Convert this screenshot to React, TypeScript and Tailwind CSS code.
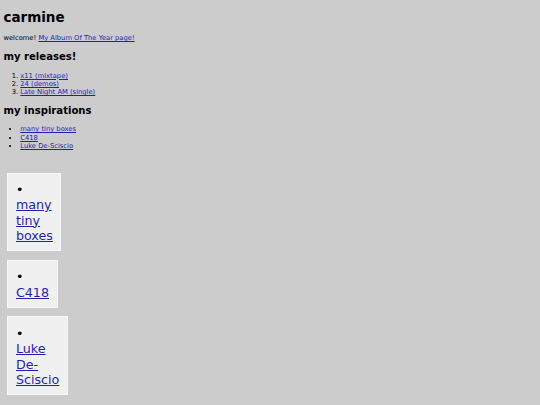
const releases = ["x11 (mixtape)", "24 (demos)", "Late Night AM (single)"];
const inspirations = ["many tiny boxes", "C418", "Luke De-Sciscio"];

const link = "text-[#1f1fb8] underline";

export default function App() {
  return (
    <div
      className="min-h-[405px] bg-[#cccccc] px-[3.4px] pt-[9px] text-black"
      style={{ fontFamily: '"DejaVu Sans", Verdana, sans-serif' }}
    >
      <h1 className="text-[13.5px] font-bold leading-[16.4px]">carmine</h1>

      <p className="mt-[9px] text-[6.75px] leading-[8.2px]">
        welcome!{" "}
        <a href="#" className={link}>
          My Album Of The Year page!
        </a>
      </p>

      <h2 className="mt-[8.4px] text-[10.1px] font-bold leading-[12.3px]">my releases!</h2>
      <ol className="mt-[8.4px] list-decimal pl-[16.9px] text-[6.75px] leading-[8.2px]">
        {releases.map((r) => (
          <li key={r}>
            <a href="#" className={link}>
              {r}
            </a>
          </li>
        ))}
      </ol>

      <h2 className="mt-[8.4px] text-[10.1px] font-bold leading-[12.3px]">my inspirations</h2>
      <ul className="mt-[8.4px] list-disc pl-[16.9px] text-[6.75px] leading-[8.2px]">
        {inspirations.map((r) => (
          <li key={r}>
            <a href="#" className={link}>
              {r}
            </a>
          </li>
        ))}
      </ul>

      <div className="mt-[22.6px] flex flex-col items-start gap-[8.4px] pl-[4px] pb-[13px]">
        {inspirations.map((r) => (
          <div
            key={r}
            className="w-min border border-[#f6f6f6] bg-[#f0f0f0] px-[7.6px] pt-[8.6px] pb-[7px] text-[12.66px] leading-[15.3px]"
          >
            <div>•</div>
            <a href="#" className={link}>
              {r}
            </a>
          </div>
        ))}
      </div>
    </div>
  );
}
